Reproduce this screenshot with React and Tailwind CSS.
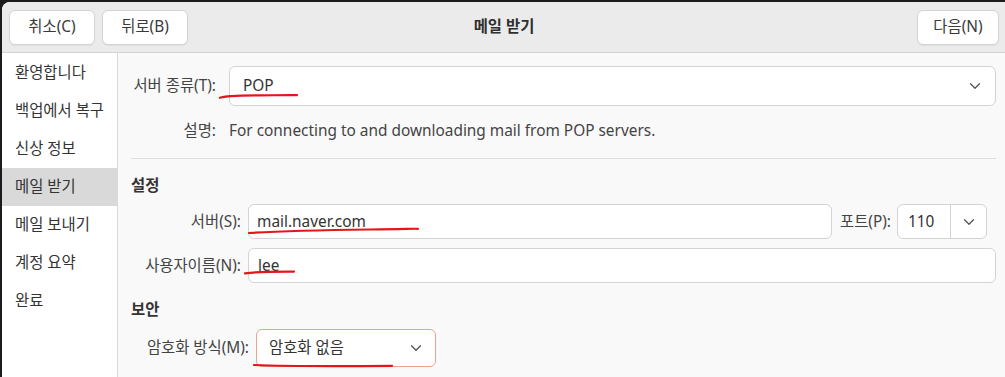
import React from "react";

const Chevron = ({ className = "" }) => (
  <svg className={className} width="12" height="8" viewBox="0 0 12 8" fill="none">
    <path d="M1.5 1.8 6 6.2l4.5-4.4" stroke="#555" strokeWidth="1.3" strokeLinecap="round" strokeLinejoin="round" />
  </svg>
);

const navItems = ["환영합니다", "백업에서 복구", "신상 정보", "메일 받기", "메일 보내기", "계정 요약", "완료"];

const HeaderButton = ({ children }) => (
  <button className="h-[35px] rounded-[6px] border border-[#d3d3d3] bg-white text-[15.4px] text-[#3a3a3a] shadow-[0_1px_1px_rgba(0,0,0,0.05)]">
    {children}
  </button>
);

export default function App() {
  return (
    <div
      className="relative h-[377px] w-[1005px] overflow-hidden bg-[#1b1b1d] pl-[2px] pt-[2px] text-[15.4px] text-[#3b3b3b]"
      style={{ fontFamily: '"Noto Sans", "Noto Sans CJK KR", sans-serif' }}
    >
      <div className="flex h-full flex-col overflow-hidden rounded-tl-[8px] bg-[#f9f9f9]">
        {/* header */}
        <div className="flex h-[51px] shrink-0 items-center border-b border-[#d2d2d2] bg-[#ebebeb] pl-[7px] pr-[6px]">
          <div className="flex w-[300px] gap-[7px]">
            <div className="w-[86px]">
              <HeaderButton>
                <span className="inline-block w-[84px]">취소(C)</span>
              </HeaderButton>
            </div>
            <div className="w-[86px]">
              <HeaderButton>
                <span className="inline-block w-[84px]">뒤로(B)</span>
              </HeaderButton>
            </div>
          </div>
          <div className="flex-1 text-center font-bold text-[#2f2f2f]">메일 받기</div>
          <div className="flex w-[300px] justify-end">
            <HeaderButton>
              <span className="inline-block w-[80px]">다음(N)</span>
            </HeaderButton>
          </div>
        </div>

        <div className="flex flex-1">
          {/* sidebar */}
          <div className="w-[116px] shrink-0 border-r border-[#dadada] bg-white pt-[1px]">
            {navItems.map((item) => (
              <div
                key={item}
                className={`flex h-[38px] items-center pl-[13px] text-[#333] ${
                  item === "메일 받기" ? "bg-[#d9d9d9]" : ""
                }`}
              >
                {item}
              </div>
            ))}
          </div>

          {/* content */}
          <div className="flex-1 pl-[13px] pr-[9px] pt-[13px]">
            <div className="flex items-center">
              <div className="w-[85px] text-right text-[#444]">서버 종류(T):</div>
              <div className="ml-[13px] flex h-[40px] flex-1 items-center justify-between rounded-[6px] border border-[#d3d3d3] bg-white pl-[13px] pr-[14px]">
                <span className="text-[#333]">POP</span>
                <Chevron />
              </div>
            </div>

            <div className="mt-[15px] flex h-[20px] items-center">
              <div className="w-[85px] text-right text-[#444]">설명:</div>
              <div className="ml-[13px] text-[#444]">For connecting to and downloading mail from POP servers.</div>
            </div>

            <div className="mt-[17px] h-px bg-[#dedede]" />

            <div className="mt-[17px] flex h-[20px] items-center font-bold text-[#333]">설정</div>

            <div className="mt-[8px] flex items-center">
              <div className="w-[110px] text-right text-[#444]">서버(S):</div>
              <div className="ml-[7px] flex h-[35px] w-[584px] items-center rounded-[6px] border border-[#d3d3d3] bg-white pl-[8px] text-[#333]">
                mail.naver.com
              </div>
              <div className="ml-[8px] text-[#444]">포트(P):</div>
              <div className="ml-[6px] flex h-[35px] w-[90px] items-center rounded-[6px] border border-[#d3d3d3] bg-white">
                <div className="flex h-full w-[53px] items-center border-r border-[#d3d3d3] pl-[10px] text-[#333]">110</div>
                <div className="flex flex-1 items-center justify-center">
                  <Chevron />
                </div>
              </div>
            </div>

            <div className="mt-[9px] flex items-center">
              <div className="w-[110px] text-right text-[#444]">사용자이름(N):</div>
              <div className="ml-[7px] flex h-[35px] flex-1 items-center rounded-[6px] border border-[#d3d3d3] bg-white pl-[9px] text-[#333]">
                lee
              </div>
            </div>

            <div className="mt-[17px] flex h-[20px] items-center font-bold text-[#333]">보안</div>

            <div className="mt-[9px] flex items-center">
              <div className="w-[118px] text-right text-[#444]">암호화 방식(M):</div>
              <div className="ml-[7px] flex h-[38px] w-[180px] items-center justify-between rounded-[6px] border-[1.5px] border-[#e8a48f] bg-white pl-[12px] pr-[13px] text-[#333]">
                <span>암호화 없음</span>
                <Chevron />
              </div>
            </div>
          </div>
        </div>
      </div>

      {/* hand-drawn red underlines */}
      <svg className="pointer-events-none absolute left-0 top-0" width="1005" height="377" fill="none">
        <g stroke="#e8141b" strokeWidth="2.2" strokeLinecap="round">
          <path d="M220 97.8 C 226 95.5, 240 95.6, 260 95.4 S 290 95, 297 95.2" />
          <path d="M249 233 C 280 231, 330 230, 370 229.5 S 410 228.6, 418 228.8" />
          <path d="M245 273.3 C 255 272, 275 271.5, 294 271.6" />
          <path d="M254 365 C 280 366, 330 366.3, 392 365.8" />
        </g>
      </svg>
    </div>
  );
}
